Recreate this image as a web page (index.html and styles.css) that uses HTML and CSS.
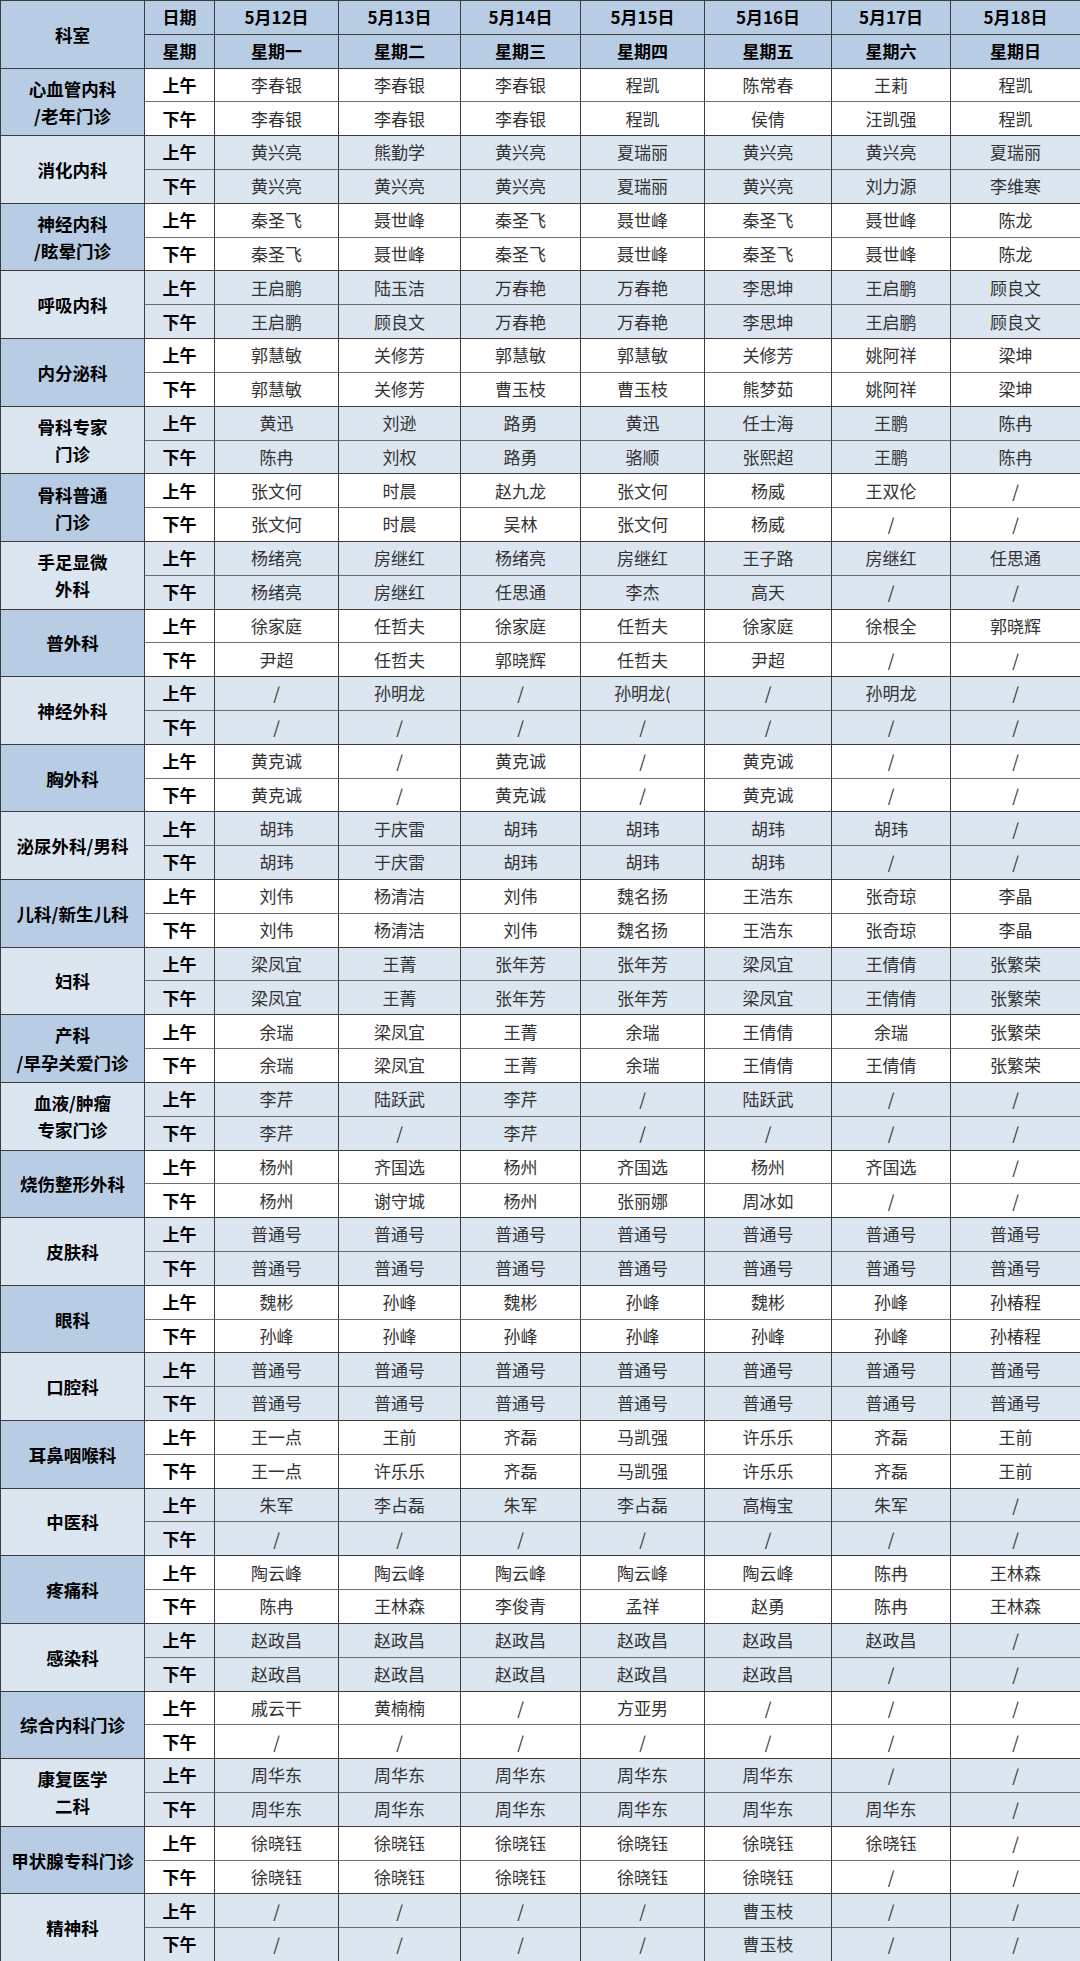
FILE: index.html
```html
<!DOCTYPE html>
<html lang="zh-CN">
<head>
<meta charset="utf-8">
<title>门诊排班表</title>
<link rel="stylesheet" href="styles.css">
</head>
<body>
<div class="sheet">
  <div class="head">
    <div class="dept">科室</div>
    <div class="lab">日期</div>
    <div class="lab">5月12日</div><div class="lab">5月13日</div><div class="lab">5月14日</div><div class="lab">5月15日</div><div class="lab">5月16日</div><div class="lab">5月17日</div><div class="lab">5月18日</div>
    <div class="lab">星期</div>
    <div class="lab">星期一</div><div class="lab">星期二</div><div class="lab">星期三</div><div class="lab">星期四</div><div class="lab">星期五</div><div class="lab">星期六</div><div class="lab">星期日</div>
  </div>

  <div class="grp">
    <div class="dept">心血管内科<br>/老年门诊</div>
    <div class="lab">上午</div><div>李春银</div><div>李春银</div><div>李春银</div><div>程凯</div><div>陈常春</div><div>王莉</div><div>程凯</div>
    <div class="lab">下午</div><div>李春银</div><div>李春银</div><div>李春银</div><div>程凯</div><div>侯倩</div><div>汪凯强</div><div>程凯</div>
  </div>
  <div class="grp alt">
    <div class="dept">消化内科</div>
    <div class="lab">上午</div><div>黄兴亮</div><div>熊勤学</div><div>黄兴亮</div><div>夏瑞丽</div><div>黄兴亮</div><div>黄兴亮</div><div>夏瑞丽</div>
    <div class="lab">下午</div><div>黄兴亮</div><div>黄兴亮</div><div>黄兴亮</div><div>夏瑞丽</div><div>黄兴亮</div><div>刘力源</div><div>李维寒</div>
  </div>
  <div class="grp">
    <div class="dept">神经内科<br>/眩晕门诊</div>
    <div class="lab">上午</div><div>秦圣飞</div><div>聂世峰</div><div>秦圣飞</div><div>聂世峰</div><div>秦圣飞</div><div>聂世峰</div><div>陈龙</div>
    <div class="lab">下午</div><div>秦圣飞</div><div>聂世峰</div><div>秦圣飞</div><div>聂世峰</div><div>秦圣飞</div><div>聂世峰</div><div>陈龙</div>
  </div>
  <div class="grp alt">
    <div class="dept">呼吸内科</div>
    <div class="lab">上午</div><div>王启鹏</div><div>陆玉洁</div><div>万春艳</div><div>万春艳</div><div>李思坤</div><div>王启鹏</div><div>顾良文</div>
    <div class="lab">下午</div><div>王启鹏</div><div>顾良文</div><div>万春艳</div><div>万春艳</div><div>李思坤</div><div>王启鹏</div><div>顾良文</div>
  </div>
  <div class="grp">
    <div class="dept">内分泌科</div>
    <div class="lab">上午</div><div>郭慧敏</div><div>关修芳</div><div>郭慧敏</div><div>郭慧敏</div><div>关修芳</div><div>姚阿祥</div><div>梁坤</div>
    <div class="lab">下午</div><div>郭慧敏</div><div>关修芳</div><div>曹玉枝</div><div>曹玉枝</div><div>熊梦茹</div><div>姚阿祥</div><div>梁坤</div>
  </div>
  <div class="grp alt">
    <div class="dept">骨科专家<br>门诊</div>
    <div class="lab">上午</div><div>黄迅</div><div>刘逊</div><div>路勇</div><div>黄迅</div><div>任士海</div><div>王鹏</div><div>陈冉</div>
    <div class="lab">下午</div><div>陈冉</div><div>刘权</div><div>路勇</div><div>骆顺</div><div>张熙超</div><div>王鹏</div><div>陈冉</div>
  </div>
  <div class="grp">
    <div class="dept">骨科普通<br>门诊</div>
    <div class="lab">上午</div><div>张文何</div><div>时晨</div><div>赵九龙</div><div>张文何</div><div>杨威</div><div>王双伦</div><div>/</div>
    <div class="lab">下午</div><div>张文何</div><div>时晨</div><div>吴林</div><div>张文何</div><div>杨威</div><div>/</div><div>/</div>
  </div>
  <div class="grp alt">
    <div class="dept">手足显微<br>外科</div>
    <div class="lab">上午</div><div>杨绪亮</div><div>房继红</div><div>杨绪亮</div><div>房继红</div><div>王子路</div><div>房继红</div><div>任思通</div>
    <div class="lab">下午</div><div>杨绪亮</div><div>房继红</div><div>任思通</div><div>李杰</div><div>高天</div><div>/</div><div>/</div>
  </div>
  <div class="grp">
    <div class="dept">普外科</div>
    <div class="lab">上午</div><div>徐家庭</div><div>任哲夫</div><div>徐家庭</div><div>任哲夫</div><div>徐家庭</div><div>徐根全</div><div>郭晓辉</div>
    <div class="lab">下午</div><div>尹超</div><div>任哲夫</div><div>郭晓辉</div><div>任哲夫</div><div>尹超</div><div>/</div><div>/</div>
  </div>
  <div class="grp alt">
    <div class="dept">神经外科</div>
    <div class="lab">上午</div><div>/</div><div>孙明龙</div><div>/</div><div>孙明龙(</div><div>/</div><div>孙明龙</div><div>/</div>
    <div class="lab">下午</div><div>/</div><div>/</div><div>/</div><div>/</div><div>/</div><div>/</div><div>/</div>
  </div>
  <div class="grp">
    <div class="dept">胸外科</div>
    <div class="lab">上午</div><div>黄克诚</div><div>/</div><div>黄克诚</div><div>/</div><div>黄克诚</div><div>/</div><div>/</div>
    <div class="lab">下午</div><div>黄克诚</div><div>/</div><div>黄克诚</div><div>/</div><div>黄克诚</div><div>/</div><div>/</div>
  </div>
  <div class="grp alt">
    <div class="dept">泌尿外科/男科</div>
    <div class="lab">上午</div><div>胡玮</div><div>于庆雷</div><div>胡玮</div><div>胡玮</div><div>胡玮</div><div>胡玮</div><div>/</div>
    <div class="lab">下午</div><div>胡玮</div><div>于庆雷</div><div>胡玮</div><div>胡玮</div><div>胡玮</div><div>/</div><div>/</div>
  </div>
  <div class="grp">
    <div class="dept">儿科/新生儿科</div>
    <div class="lab">上午</div><div>刘伟</div><div>杨清洁</div><div>刘伟</div><div>魏名扬</div><div>王浩东</div><div>张奇琼</div><div>李晶</div>
    <div class="lab">下午</div><div>刘伟</div><div>杨清洁</div><div>刘伟</div><div>魏名扬</div><div>王浩东</div><div>张奇琼</div><div>李晶</div>
  </div>
  <div class="grp alt">
    <div class="dept">妇科</div>
    <div class="lab">上午</div><div>梁凤宜</div><div>王菁</div><div>张年芳</div><div>张年芳</div><div>梁凤宜</div><div>王倩倩</div><div>张繁荣</div>
    <div class="lab">下午</div><div>梁凤宜</div><div>王菁</div><div>张年芳</div><div>张年芳</div><div>梁凤宜</div><div>王倩倩</div><div>张繁荣</div>
  </div>
  <div class="grp">
    <div class="dept">产科<br>/早孕关爱门诊</div>
    <div class="lab">上午</div><div>余瑞</div><div>梁凤宜</div><div>王菁</div><div>余瑞</div><div>王倩倩</div><div>余瑞</div><div>张繁荣</div>
    <div class="lab">下午</div><div>余瑞</div><div>梁凤宜</div><div>王菁</div><div>余瑞</div><div>王倩倩</div><div>王倩倩</div><div>张繁荣</div>
  </div>
  <div class="grp alt">
    <div class="dept">血液/肿瘤<br>专家门诊</div>
    <div class="lab">上午</div><div>李芹</div><div>陆跃武</div><div>李芹</div><div>/</div><div>陆跃武</div><div>/</div><div>/</div>
    <div class="lab">下午</div><div>李芹</div><div>/</div><div>李芹</div><div>/</div><div>/</div><div>/</div><div>/</div>
  </div>
  <div class="grp">
    <div class="dept">烧伤整形外科</div>
    <div class="lab">上午</div><div>杨州</div><div>齐国选</div><div>杨州</div><div>齐国选</div><div>杨州</div><div>齐国选</div><div>/</div>
    <div class="lab">下午</div><div>杨州</div><div>谢守城</div><div>杨州</div><div>张丽娜</div><div>周冰如</div><div>/</div><div>/</div>
  </div>
  <div class="grp alt">
    <div class="dept">皮肤科</div>
    <div class="lab">上午</div><div>普通号</div><div>普通号</div><div>普通号</div><div>普通号</div><div>普通号</div><div>普通号</div><div>普通号</div>
    <div class="lab">下午</div><div>普通号</div><div>普通号</div><div>普通号</div><div>普通号</div><div>普通号</div><div>普通号</div><div>普通号</div>
  </div>
  <div class="grp">
    <div class="dept">眼科</div>
    <div class="lab">上午</div><div>魏彬</div><div>孙峰</div><div>魏彬</div><div>孙峰</div><div>魏彬</div><div>孙峰</div><div>孙椿程</div>
    <div class="lab">下午</div><div>孙峰</div><div>孙峰</div><div>孙峰</div><div>孙峰</div><div>孙峰</div><div>孙峰</div><div>孙椿程</div>
  </div>
  <div class="grp alt">
    <div class="dept">口腔科</div>
    <div class="lab">上午</div><div>普通号</div><div>普通号</div><div>普通号</div><div>普通号</div><div>普通号</div><div>普通号</div><div>普通号</div>
    <div class="lab">下午</div><div>普通号</div><div>普通号</div><div>普通号</div><div>普通号</div><div>普通号</div><div>普通号</div><div>普通号</div>
  </div>
  <div class="grp">
    <div class="dept">耳鼻咽喉科</div>
    <div class="lab">上午</div><div>王一点</div><div>王前</div><div>齐磊</div><div>马凯强</div><div>许乐乐</div><div>齐磊</div><div>王前</div>
    <div class="lab">下午</div><div>王一点</div><div>许乐乐</div><div>齐磊</div><div>马凯强</div><div>许乐乐</div><div>齐磊</div><div>王前</div>
  </div>
  <div class="grp alt">
    <div class="dept">中医科</div>
    <div class="lab">上午</div><div>朱军</div><div>李占磊</div><div>朱军</div><div>李占磊</div><div>高梅宝</div><div>朱军</div><div>/</div>
    <div class="lab">下午</div><div>/</div><div>/</div><div>/</div><div>/</div><div>/</div><div>/</div><div>/</div>
  </div>
  <div class="grp">
    <div class="dept">疼痛科</div>
    <div class="lab">上午</div><div>陶云峰</div><div>陶云峰</div><div>陶云峰</div><div>陶云峰</div><div>陶云峰</div><div>陈冉</div><div>王林森</div>
    <div class="lab">下午</div><div>陈冉</div><div>王林森</div><div>李俊青</div><div>孟祥</div><div>赵勇</div><div>陈冉</div><div>王林森</div>
  </div>
  <div class="grp alt">
    <div class="dept">感染科</div>
    <div class="lab">上午</div><div>赵政昌</div><div>赵政昌</div><div>赵政昌</div><div>赵政昌</div><div>赵政昌</div><div>赵政昌</div><div>/</div>
    <div class="lab">下午</div><div>赵政昌</div><div>赵政昌</div><div>赵政昌</div><div>赵政昌</div><div>赵政昌</div><div>/</div><div>/</div>
  </div>
  <div class="grp">
    <div class="dept">综合内科门诊</div>
    <div class="lab">上午</div><div>戚云干</div><div>黄楠楠</div><div>/</div><div>方亚男</div><div>/</div><div>/</div><div>/</div>
    <div class="lab">下午</div><div>/</div><div>/</div><div>/</div><div>/</div><div>/</div><div>/</div><div>/</div>
  </div>
  <div class="grp alt">
    <div class="dept">康复医学<br>二科</div>
    <div class="lab">上午</div><div>周华东</div><div>周华东</div><div>周华东</div><div>周华东</div><div>周华东</div><div>/</div><div>/</div>
    <div class="lab">下午</div><div>周华东</div><div>周华东</div><div>周华东</div><div>周华东</div><div>周华东</div><div>周华东</div><div>/</div>
  </div>
  <div class="grp">
    <div class="dept">甲状腺专科门诊</div>
    <div class="lab">上午</div><div>徐晓钰</div><div>徐晓钰</div><div>徐晓钰</div><div>徐晓钰</div><div>徐晓钰</div><div>徐晓钰</div><div>/</div>
    <div class="lab">下午</div><div>徐晓钰</div><div>徐晓钰</div><div>徐晓钰</div><div>徐晓钰</div><div>徐晓钰</div><div>/</div><div>/</div>
  </div>
  <div class="grp alt">
    <div class="dept">精神科</div>
    <div class="lab">上午</div><div>/</div><div>/</div><div>/</div><div>/</div><div>曹玉枝</div><div>/</div><div>/</div>
    <div class="lab">下午</div><div>/</div><div>/</div><div>/</div><div>/</div><div>曹玉枝</div><div>/</div><div>/</div>
  </div>
</div>
</body>
</html>
```
FILE: styles.css
```css
html, body {
  margin: 0;
  padding: 0;
  background: #ffffff;
}

.sheet {
  width: 1080px;
  height: 1961px;
  display: grid;
  grid-template-columns: 144px 70px 124px 122px 120px 124px 127px 119px 130px;
  grid-template-rows: repeat(58, 1fr);
  font-family: "Noto Sans CJK SC", "Noto Sans", sans-serif;
  font-size: 17px;
  color: #333333;
  overflow: hidden;
}

.head,
.grp {
  display: contents;
}

.sheet .head > div,
.sheet .grp > div {
  box-sizing: border-box;
  border-top: 1px solid #3c3c3c;
  border-left: 1px solid #3c3c3c;
  display: flex;
  align-items: center;
  justify-content: center;
  text-align: center;
  line-height: 1.55;
  background: #ffffff;
}

.sheet .grp > div:nth-child(n+10) {
  border-top-color: #6e6e6e;
}

.sheet .grp.alt > div {
  background: #dce6f1;
}

.sheet .head > div {
  background: #b8cce4;
  color: #000000;
  font-weight: 700;
}

.sheet .head > .dept,
.sheet .grp > .dept {
  grid-row: span 2;
  background: #b8cce4;
  color: #000000;
  font-weight: 700;
  font-size: 17.5px;
}

.sheet .lab {
  color: #000000;
  font-weight: 700;
}
```
